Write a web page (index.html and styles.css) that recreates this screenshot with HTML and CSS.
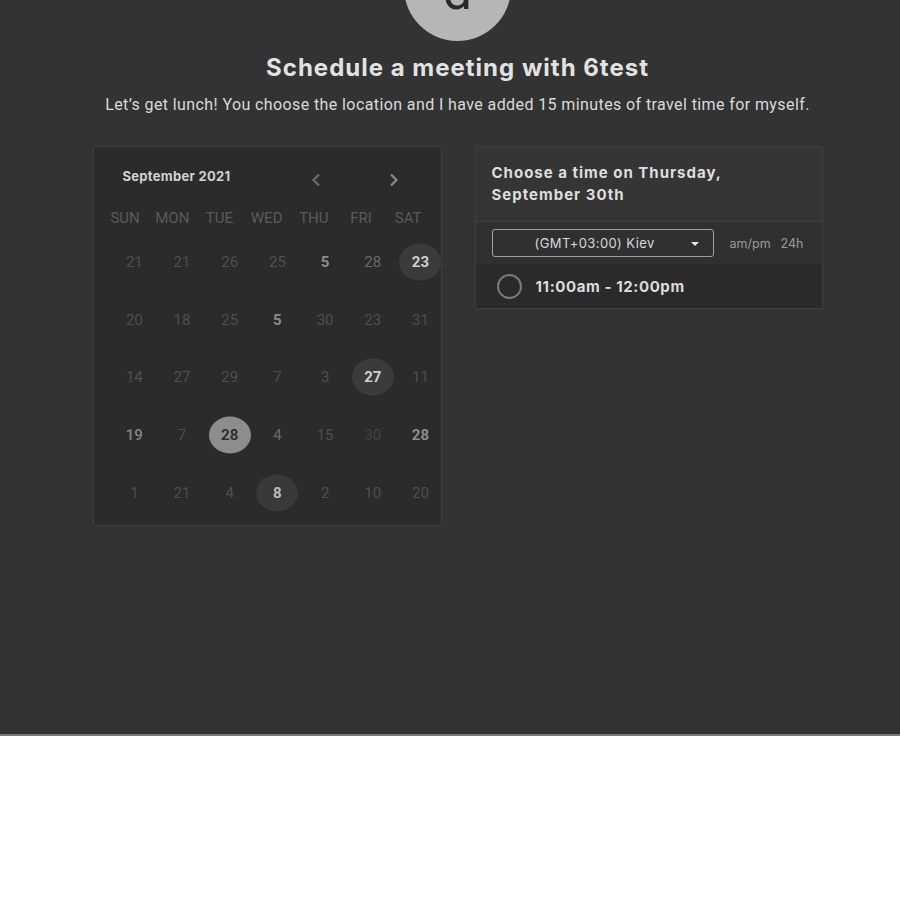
FILE: index.html
```html
<!DOCTYPE html>
<html>
<head>
<meta charset="utf-8">
<link rel="stylesheet" href="styles.css">
</head>
<body>
<div class="page">
  <div class="avatar"><span>d</span></div>
  <h1 class="title">Schedule a meeting with 6test</h1>
  <p class="subtitle">Let’s get lunch! You choose the location and I have added 15 minutes of travel time for myself.</p>
  <div class="cards">
    <div class="calendar">
      <div class="cal-head">
        <span class="month">September 2021</span>
        <span class="nav prev"><svg width="10" height="14" viewBox="0 0 10 14"><path d="M8 1.5 L2.5 7 L8 12.5" fill="none" stroke="currentColor" stroke-width="2.2"/></svg></span>
        <span class="nav next"><svg width="10" height="14" viewBox="0 0 10 14"><path d="M2 1.5 L7.5 7 L2 12.5" fill="none" stroke="currentColor" stroke-width="2.2"/></svg></span>
      </div>
      <div class="weekdays">
        <span>SUN</span><span>MON</span><span>TUE</span><span>WED</span><span>THU</span><span>FRI</span><span>SAT</span>
      </div>
      <div class="days">
        <span class="d">21</span><span class="d">21</span><span class="d">26</span><span class="d">25</span><span class="d b">5</span><span class="d m">28</span><span class="d c1">23</span>
        <span class="d">20</span><span class="d">18</span><span class="d">25</span><span class="d b">5</span><span class="d">30</span><span class="d">23</span><span class="d">31</span>
        <span class="d">14</span><span class="d">27</span><span class="d">29</span><span class="d">7</span><span class="d">3</span><span class="d c1">27</span><span class="d">11</span>
        <span class="d mb">19</span><span class="d">7</span><span class="d sel">28</span><span class="d m">4</span><span class="d">15</span><span class="d x">30</span><span class="d b">28</span>
        <span class="d">1</span><span class="d">21</span><span class="d">4</span><span class="d c2">8</span><span class="d">2</span><span class="d">10</span><span class="d">20</span>
      </div>
    </div>
    <div class="times">
      <div class="times-head">Choose a time on Thursday, September 30th</div>
      <div class="tz-row">
        <div class="tz-select"><span>(GMT+03:00) Kiev</span><span class="caret"></span></div>
        <div class="fmt"><span>am/pm</span><span>24h</span></div>
      </div>
      <div class="slot">
        <span class="radio"></span>
        <span class="slot-text">11:00am - 12:00pm</span>
      </div>
    </div>
  </div>
</div>
</body>
</html>
```
FILE: styles.css
```css
html, body {
  margin: 0;
  padding: 0;
  background: #ffffff;
}
body {
  font-family: Roboto, "Liberation Sans", sans-serif;
}
.page {
  background: #333333;
  height: 734px;
  border-bottom: 2px solid #7a7a7a;
  overflow: hidden;
  display: flex;
  flex-direction: column;
  align-items: center;
  padding-left: 15px;
}
.avatar {
  width: 107px;
  height: 107px;
  border-radius: 50%;
  background: #b6b6b6;
  margin-top: -66px;
  display: flex;
  align-items: center;
  justify-content: center;
}
.avatar span {
  font-family: Roboto, sans-serif;
  font-size: 52px;
  color: #2a2a2a;
  line-height: 1;
  margin-top: 8px;
}
.title {
  margin: 12px 0 0;
  font-family: Inter, Roboto, sans-serif;
  font-size: 24px;
  font-weight: 700;
  color: #e2e2e2;
  line-height: 30px;
  letter-spacing: 1px;
}
.subtitle {
  margin: 12px 0 0;
  font-size: 16px;
  color: #dadada;
  line-height: 20px;
  letter-spacing: 0.4px;
}
.cards {
  display: flex;
  gap: 33px;
  margin-top: 31px;
  align-items: flex-start;
}
.calendar {
  width: 347px;
  height: 378px;
  background: #2b2b2b;
  border: 1px solid #3e3e3e;
  border-radius: 2px;
  box-sizing: content-box;
}
.cal-head {
  display: flex;
  align-items: center;
  height: 60px;
  padding-left: 29px;
}
.month {
  font-family: Inter, Roboto, sans-serif;
  font-size: 13px;
  font-weight: 700;
  letter-spacing: 0.3px;
  color: #d2d2d2;
  width: 188px;
  margin-top: -2px;
}
.nav {
  display: flex;
  width: 10px;
  margin-top: 5px;
}
.prev { color: #6a6a6a; }
.next { color: #8a8a8a; margin-left: 68px; }
.weekdays {
  display: grid;
  grid-template-columns: repeat(7, 47.2px);
  padding-left: 8px;
  font-size: 15px;
  color: #5a5a5a;
  height: 22px;
  line-height: 22px;
}
.weekdays span { text-align: center; }
.days {
  display: grid;
  grid-template-columns: repeat(7, 47.7px);
  grid-auto-rows: 57.75px;
  padding-left: 17px;
  margin-top: 4px;
}
.d {
  display: flex;
  align-items: center;
  justify-content: center;
  font-size: 15px;
  color: #4e4e4e;
  position: relative;
}
.d.b { color: #8c8c8c; font-weight: 700; }
.d.m { color: #6a6a6a; }
.d.mb { color: #858585; font-weight: 500; }
.d.x { color: #444444; }
.d.c1, .d.c2, .d.sel {
  font-weight: 700;
  z-index: 0;
}
.d.c1::before, .d.c2::before, .d.sel::before {
  content: "";
  position: absolute;
  width: 42px;
  height: 37px;
  border-radius: 50%;
  left: 50%;
  top: 50%;
  transform: translate(-50%, -50%);
  z-index: -1;
}
.d.c1 { color: #cfcfcf; }
.d.c1::before { background: #3b3b3b; }
.d.c2 { color: #bdbdbd; }
.d.c2::before { background: #393939; }
.d.sel { color: #2f2f2f; }
.d.sel::before { background: #8d8d8d; }

.times {
  width: 346px;
  background: #2b2b2b;
  border: 1px solid #3e3e3e;
  border-radius: 2px;
}
.times-head {
  background: #353535;
  padding: 15px 60px 15px 16px;
  font-family: Inter, Roboto, sans-serif;
  font-size: 15px;
  font-weight: 700;
  line-height: 22px;
  letter-spacing: 1px;
  color: #dedede;
  border-bottom: 1px solid #3f3f3f;
}
.tz-row {
  background: #303030;
  display: flex;
  align-items: center;
  height: 42px;
  padding-left: 16px;
}
.tz-select {
  width: 220px;
  height: 26px;
  border: 1px solid #a0a0a0;
  border-radius: 3px;
  display: flex;
  align-items: center;
  box-sizing: content-box;
  font-family: Inter, Roboto, sans-serif;
  font-size: 13px;
  letter-spacing: 0.4px;
  color: #d8d8d8;
  position: relative;
}
.tz-select span:first-child {
  margin-left: 42px;
}
.caret {
  position: absolute;
  right: 14px;
  top: 12px;
  width: 0;
  height: 0;
  border-left: 4px solid transparent;
  border-right: 4px solid transparent;
  border-top: 4px solid #e6e6e6;
}
.fmt {
  display: flex;
  gap: 10px;
  margin-left: 16px;
  font-family: Inter, Roboto, sans-serif;
  font-size: 12.5px;
  color: #9a9a9a;
}
.slot {
  display: flex;
  align-items: center;
  height: 44px;
  padding-left: 21px;
  background: #2a2a2a;
}
.radio {
  width: 21px;
  height: 21px;
  border: 2px solid #7a7a7a;
  border-radius: 50%;
}
.slot-text {
  margin-left: 14px;
  font-family: Inter, Roboto, sans-serif;
  font-size: 15px;
  font-weight: 700;
  letter-spacing: 0.6px;
  color: #dcdcdc;
}
```
